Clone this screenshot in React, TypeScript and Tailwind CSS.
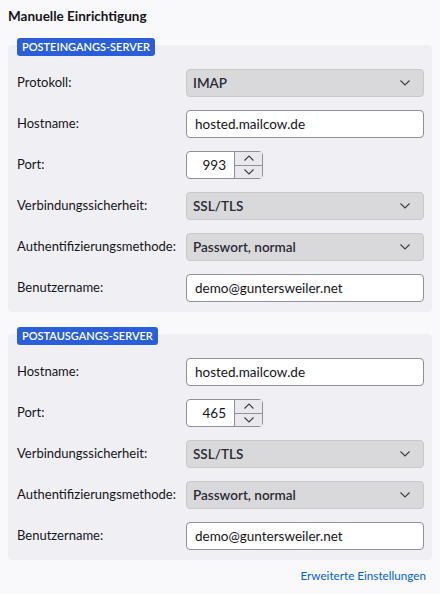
import React from 'react';

const font = { fontFamily: 'Lato, "Noto Sans", Arial, sans-serif' };

const Chevron = ({ up = false, className = '' }: { up?: boolean; className?: string }) => (
  <svg width="10" height="6" viewBox="0 0 10 6" className={className} fill="none">
    <path
      d={up ? 'M0.5 5.5 L5 1 L9.5 5.5' : 'M0.5 0.5 L5 5 L9.5 0.5'}
      stroke="#3b3b45"
      strokeWidth="1.1"
    />
  </svg>
);

type Row =
  | { kind: 'select'; label: string; value: string }
  | { kind: 'text'; label: string; value: string }
  | { kind: 'port'; label: string; value: string };

const Control: React.FC<{ row: Row }> = ({ row }) => {
  if (row.kind === 'select') {
    return (
      <div className="flex h-[28px] w-[238px] items-center justify-between rounded-[4px] border border-[#c9c9cc] bg-[#d9d9dc] pl-[6px] pr-[13px] text-[13.5px] font-semibold text-[#2b2a33]">
        <span>{row.value}</span>
        <Chevron />
      </div>
    );
  }
  if (row.kind === 'port') {
    return (
      <div className="flex h-[28px] w-[77px] rounded-[4px] border border-[#8f8f9d] bg-white">
        <div className="flex flex-1 items-center justify-end pr-[8px] text-[13.5px] text-[#15141a]">{row.value}</div>
        <div className="flex w-[28px] flex-col">
          <div className="flex flex-1 items-center justify-center border-b border-l border-[#8f8f9d] bg-[#e9e9ed]">
            <Chevron up />
          </div>
          <div className="flex flex-1 items-center justify-center border-l border-[#8f8f9d] bg-[#e9e9ed]">
            <Chevron />
          </div>
        </div>
      </div>
    );
  }
  return (
    <div className="flex h-[28px] w-[238px] items-center rounded-[4px] border border-[#8f8f9d] bg-white pl-[8px] text-[13.5px] text-[#15141a]">
      {row.value}
    </div>
  );
};

const Section: React.FC<{ title: string; rows: Row[] }> = ({ title, rows }) => (
  <div className="flex flex-col">
    <div className="relative z-10 ml-[9px] self-start rounded-[3px] bg-[#2a5fd9] px-[5px] text-[11px] leading-[18px] font-semibold text-white">
      {title}
    </div>
    <div className="-mt-[11px] rounded-[4px] bg-[#f0f0f4] pb-[10px] pl-[9px] pr-[8px] pt-[24px]">
      <div className="flex flex-col gap-[13px]">
        {rows.map((row, i) => (
          <div key={i} className="grid grid-cols-[169px_238px] items-center">
            <span className="text-[13px] text-[#15141a]">{row.label}</span>
            <Control row={row} />
          </div>
        ))}
      </div>
    </div>
  </div>
);

export default function App() {
  const incoming: Row[] = [
    { kind: 'select', label: 'Protokoll:', value: 'IMAP' },
    { kind: 'text', label: 'Hostname:', value: 'hosted.mailcow.de' },
    { kind: 'port', label: 'Port:', value: '993' },
    { kind: 'select', label: 'Verbindungssicherheit:', value: 'SSL/TLS' },
    { kind: 'select', label: 'Authentifizierungsmethode:', value: 'Passwort, normal' },
    { kind: 'text', label: 'Benutzername:', value: 'demo@guntersweiler.net' },
  ];
  const outgoing: Row[] = [
    { kind: 'text', label: 'Hostname:', value: 'hosted.mailcow.de' },
    { kind: 'port', label: 'Port:', value: '465' },
    { kind: 'select', label: 'Verbindungssicherheit:', value: 'SSL/TLS' },
    { kind: 'select', label: 'Authentifizierungsmethode:', value: 'Passwort, normal' },
    { kind: 'text', label: 'Benutzername:', value: 'demo@guntersweiler.net' },
  ];

  return (
    <div style={font} className="h-[594px] w-[440px] overflow-hidden bg-[#f9f9fb] px-[8px] pt-[6px]">
      <h1 className="text-[13.5px] leading-[20px] font-bold text-[#15141a]">Manuelle Einrichtigung</h1>
      <div className="mt-[12px] flex flex-col gap-[15px]">
        <Section title="POSTEINGANGS-SERVER" rows={incoming} />
        <Section title="POSTAUSGANGS-SERVER" rows={outgoing} />
      </div>
      <div className="mt-[7px] flex justify-end pr-[6px]">
        <span className="text-[11.7px] text-[#0061e0]">Erweiterte Einstellungen</span>
      </div>
    </div>
  );
}
